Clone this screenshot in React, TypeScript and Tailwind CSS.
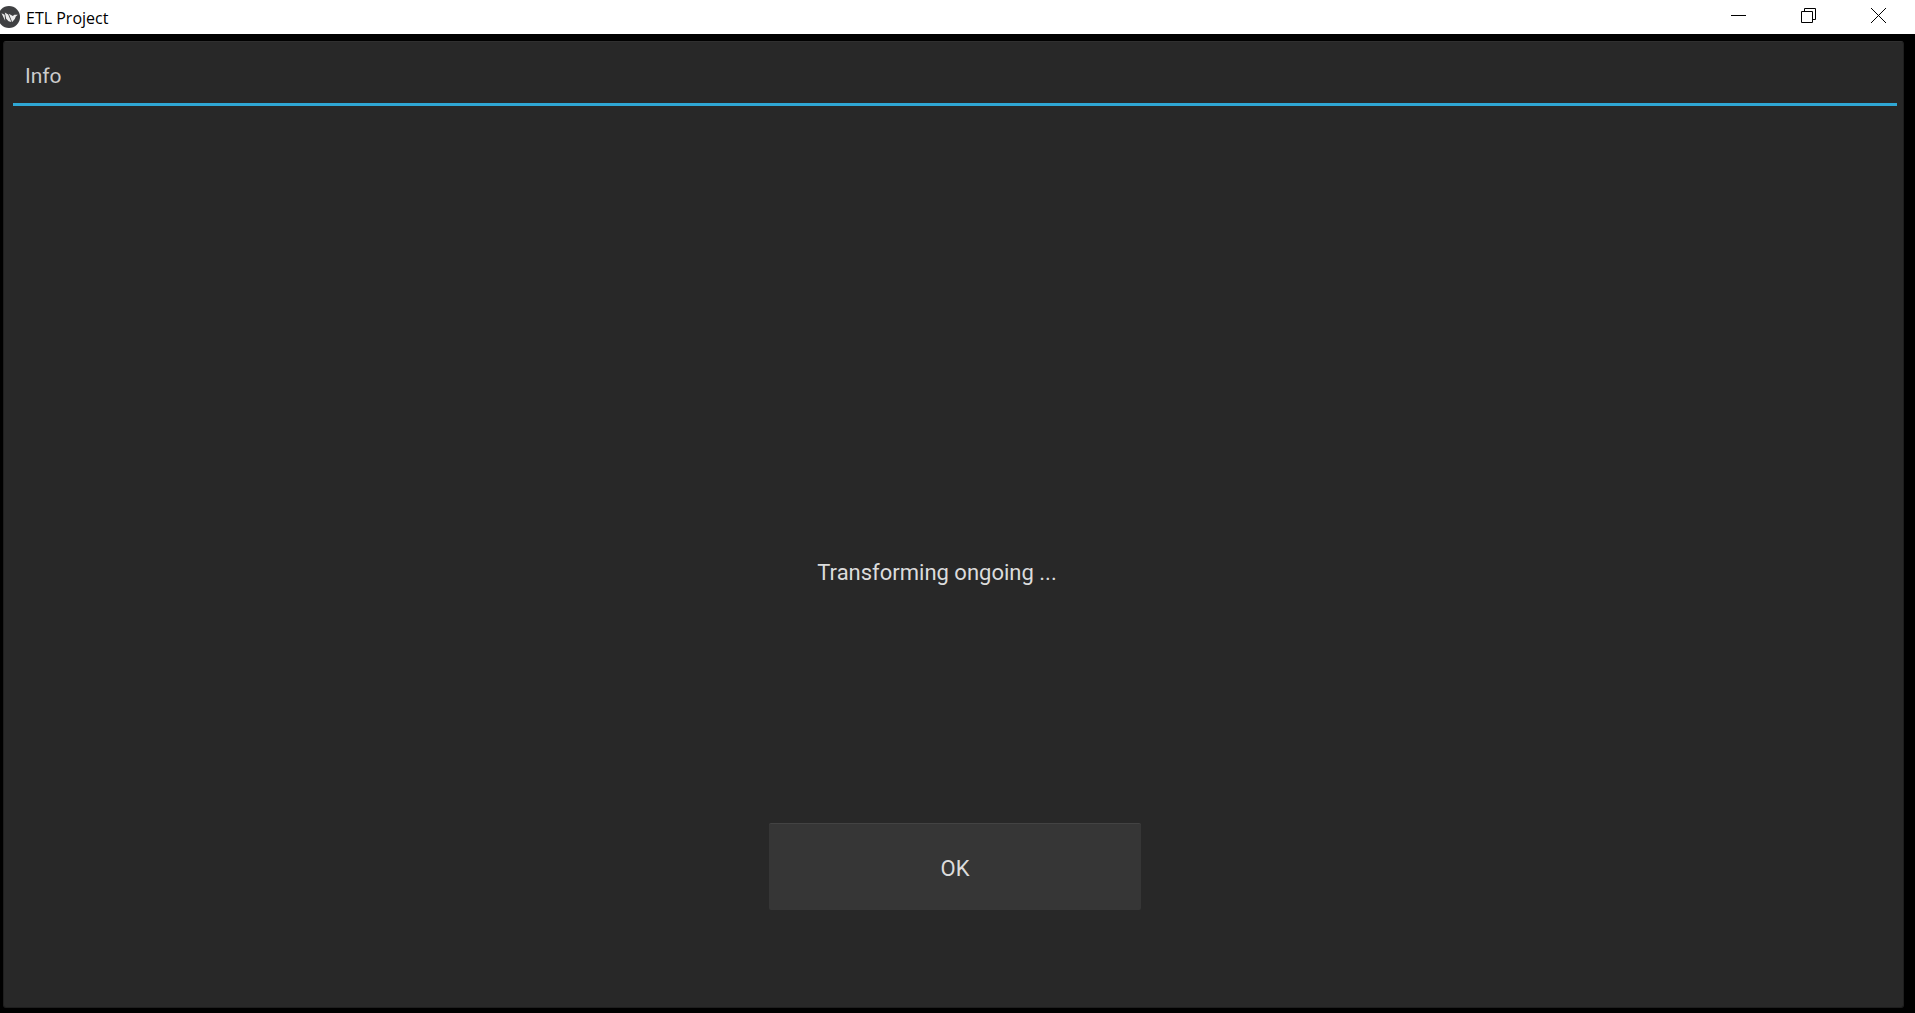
function AppLogo() {
  return (
    <svg width="20" height="22" viewBox="0 0 20 22" aria-hidden="true">
      <circle cx="9" cy="11" r="11" fill="#3f4042" />
      <path d="M1.5 7.2 L4.6 8.8 L5.2 14.8 Z" fill="#ececec" />
      <path d="M4.8 6.6 L8.2 8.4 L11.4 16 L8.6 15.2 L6.2 12.8 Z" fill="#ececec" />
      <path d="M8.8 7.8 L12.8 10 L14.4 8.8 L17.8 8.8 L15.8 10.6 L14.8 13 L12.2 16 Z" fill="#ececec" />
    </svg>
  );
}

const captionButton = "flex h-full w-[70px] items-start justify-center pt-2";

function TitleBar() {
  return (
    <header className="flex h-[34px] shrink-0 items-start justify-between bg-white pr-0.5 text-black">
      <div className="flex items-center gap-1.5 pt-1">
        <AppLogo />
        <h1 className="pt-0.5 font-['Open_Sans',sans-serif] text-base leading-6">ETL Project</h1>
      </div>
      <div className="flex h-full">
        <button type="button" aria-label="Minimize" className={captionButton}>
          <svg width="15" height="15" viewBox="0 0 15 15" stroke="black" fill="none">
            <path d="M0 7.5H15" />
          </svg>
        </button>
        <button type="button" aria-label="Restore" className={captionButton}>
          <svg width="15" height="15" viewBox="0 0 15 15" stroke="black" fill="none">
            <path d="M0.5 3.5H11.5V14.5H0.5ZM3.5 3.5V0.5H14.5V11.5H11.5" />
          </svg>
        </button>
        <button type="button" aria-label="Close" className={captionButton}>
          <svg width="15" height="15" viewBox="0 0 15 15" stroke="black" fill="none">
            <path d="M0 0L15 15M15 0L0 15" />
          </svg>
        </button>
      </div>
    </header>
  );
}

export default function App() {
  return (
    <div className="flex h-screen flex-col bg-black font-[Roboto,sans-serif] text-[#dcdcdc]">
      <TitleBar />
      <main className="mt-[7px] mr-[11px] mb-[5px] ml-[3px] flex flex-1 flex-col rounded-[3px] border border-[#1e1e1e] border-t-[#303030] bg-[#282828] pr-1.5 pl-[9px]">
        <h2 className="border-b-3 border-[#2fa7d4] px-3 pt-5 pb-[13px] text-[21px] leading-7 font-[450] text-[#cccccc]">
          Info
        </h2>
        <section className="flex flex-1 flex-col items-center font-[450]">
          <div className="grow-[454]" />
          <p className="pr-9 text-[22px] leading-7">Transforming ongoing ...</p>
          <div className="grow-[236]" />
          <button
            type="button"
            className="h-[87px] w-[372px] rounded-[2px] border-t border-[#434343] bg-[#363636] pt-1 text-[22px] leading-7"
          >
            OK
          </button>
          <div className="grow-[97]" />
        </section>
      </main>
    </div>
  );
}
